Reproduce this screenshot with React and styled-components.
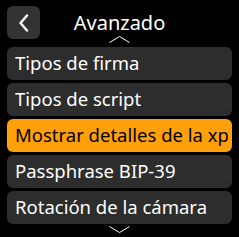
import React from "react";
import styled, { createGlobalStyle } from "styled-components";

const GlobalStyle = createGlobalStyle`
  html, body {
    margin: 0;
    padding: 0;
    background: #000;
  }
  body {
    font-family: "Noto Sans", "Open Sans", sans-serif;
    -webkit-font-smoothing: antialiased;
  }
`;

const Screen = styled.div`
  width: 239px;
  height: 237px;
  background: #000;
  overflow: hidden;
  box-sizing: border-box;
  padding: 6px 7px 0 7px;
  display: flex;
  flex-direction: column;
`;

const Header = styled.div`
  display: grid;
  grid-template-columns: 33px 1fr 33px;
  align-items: center;
  height: 33px;
`;

const BackButton = styled.button`
  width: 33px;
  height: 33px;
  border: none;
  border-radius: 6px;
  background: #333333;
  padding: 0;
  display: flex;
  align-items: center;
  justify-content: center;
`;

const Title = styled.div`
  line-height: 31px;
  text-align: center;
  color: #fff;
  font-size: 20px;
`;

const ScrollMark = styled.svg`
  display: block;
  align-self: center;
  flex: none;
  width: 21px;
  height: 7px;
  margin-top: ${(p) => p.$gap}px;
`;

const List = styled.div`
  display: flex;
  flex-direction: column;
  gap: 3px;
  margin-top: 4px;
`;

const Row = styled.div`
  height: 33px;
  line-height: 31px;
  border-radius: 6px;
  padding: 0 4px 0 8px;
  background: ${(p) => (p.$active ? "#ff9f0a" : "#2d2d2d")};
  color: ${(p) => (p.$active ? "#000" : "#fff")};
  font-size: 18.5px;
  white-space: nowrap;
  overflow: hidden;
`;

const RowText = styled.div`
  overflow: hidden;
`;

const items = [
  "Tipos de firma",
  "Tipos de script",
  "Mostrar detalles de la xpub",
  "Passphrase BIP-39",
  "Rotación de la cámara",
];

export default function App() {
  return (
    <>
      <GlobalStyle />
      <Screen>
        <Header>
          <BackButton>
            <svg width="12" height="18" viewBox="0 0 12 18">
              <path d="M9 1.5 L2.5 9 L9 16.5" fill="none" stroke="#fff" strokeWidth="2.4" strokeLinecap="round" strokeLinejoin="round" />
            </svg>
          </BackButton>
          <Title>Avanzado</Title>
          <span />
        </Header>
        <ScrollMark $gap={-3} viewBox="0 0 21 7">
          <path d="M0.5 6.5 L10.5 0.5 L20.5 6.5" fill="none" stroke="#fff" strokeWidth="1" />
        </ScrollMark>
        <List>
          {items.map((t, i) => (
            <Row key={i} $active={i === 2}>
              <RowText>{t}</RowText>
            </Row>
          ))}
        </List>
        <ScrollMark $gap={2} viewBox="0 0 21 7">
          <path d="M0.5 0.5 L10.5 6.5 L20.5 0.5" fill="none" stroke="#fff" strokeWidth="1" />
        </ScrollMark>
      </Screen>
    </>
  );
}
